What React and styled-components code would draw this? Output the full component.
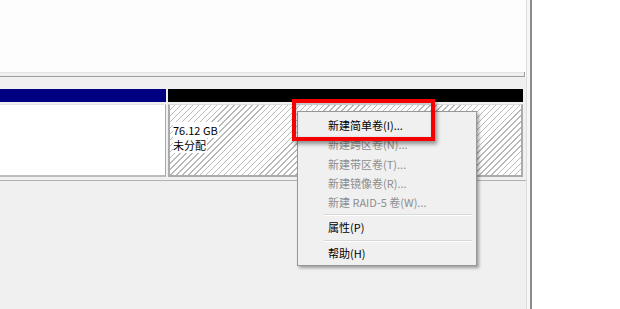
import styled, { createGlobalStyle } from "styled-components";

const GlobalStyle = createGlobalStyle`
  html, body {
    margin: 0;
    padding: 0;
    background: #fff;
  }
  body {
    font-family: "Noto Sans CJK SC", "Microsoft YaHei", sans-serif;
    font-size: 11px;
    color: #000;
  }
`;

const Screen = styled.div`
  position: relative;
  width: 620px;
  height: 309px;
  overflow: hidden;
  display: flex;
  background: #fff;
`;

const MainColumn = styled.div`
  width: 526px;
  display: flex;
  flex-direction: column;
`;

const ListPane = styled.div`
  height: 72px;
  background: #fdfdfd;
`;

const PaneEdge = styled.div`
  position: relative;
  height: 3px;
  margin-right: 1px;
  background: #f0f0f0;
  border-top: 1px solid #e4e4e4;
  border-bottom: 1px solid #9d9d9d;

  &::after {
    content: "";
    position: absolute;
    right: 0;
    bottom: 0;
    width: 1px;
    height: 4px;
    background: #9d9d9d;
  }
`;

const GraphPane = styled.div`
  flex: 1;
  background: #f0f0f0;
  padding-top: 12px;
  display: flex;
  flex-direction: column;
`;

const DiskRow = styled.div`
  display: flex;
  gap: 2px;
`;

const Partition = styled.div`
  width: ${({ width }) => width}px;
  display: flex;
  flex-direction: column;
  gap: 2px;
`;

const HeaderBar = styled.div`
  height: 13px;
  background: ${({ color }) => color};
`;

const VolumeBox = styled.div`
  height: 73px;
  box-sizing: border-box;
  background: #fff;
  border-right: 1px solid #a9a9a9;
  border-bottom: 2px solid #bcbcbc;
  border-top: 1px solid #e6e6e6;
`;

const FreeBox = styled.div`
  height: 73px;
  box-sizing: border-box;
  border: 2px solid #ababab;
  border-top: 1px solid #dedede;
  padding: 18px 0 0 3px;
  background-color: #fff;
  background-image: repeating-linear-gradient(
    135deg,
    #fff 0px,
    #fff 3.2px,
    #b9b9b9 3.2px,
    #b9b9b9 4.2px
  );
`;

const FreeLabel = styled.div`
  line-height: 15px;
  height: 15px;

  span {
    background: #fff;
    padding-right: 1px;
  }
`;

const RowRule = styled.div`
  height: 1px;
  margin-top: 3px;
  background: #b2b2b2;
`;

const Splitter = styled.div`
  width: 6px;
  box-sizing: border-box;
  background: #f7f7f7;
  border-left: 1px solid #dcdcdc;
  border-right: 2px solid #8c8c8c;
`;

const SidePane = styled.div`
  flex: 1;
  background: #fff;
`;

const Menu = styled.div`
  position: absolute;
  left: 297px;
  top: 111px;
  width: 180px;
  box-sizing: border-box;
  padding: 4px 2px 2px 2px;
  background: #f0f0f0;
  border: 1px solid #979797;
  box-shadow: 2px 2px 3px rgba(0, 0, 0, 0.35);
`;

const MenuItem = styled.div`
  height: 19.25px;
  line-height: 19.25px;
  padding-left: 28px;
  white-space: nowrap;
  color: ${({ disabled }) => (disabled ? "#8d8d8d" : "#000")};
`;

const MenuSeparator = styled.div`
  height: 1px;
  margin: 2px 2px 2px 24px;
  background: #d7d7d7;
  border-bottom: 1px solid #fff;
`;

const Highlight = styled.div`
  position: absolute;
  left: 292px;
  top: 99px;
  width: 143px;
  height: 42px;
  box-sizing: border-box;
  border: 4px solid #f40000;
  box-shadow: 2px 3px 4px rgba(0, 0, 0, 0.4),
    inset 1px 1px 3px rgba(0, 0, 0, 0.25);
`;

const menuItems = [
  { label: "新建简单卷(I)..." },
  { label: "新建跨区卷(N)...", disabled: true },
  { label: "新建带区卷(T)...", disabled: true },
  { label: "新建镜像卷(R)...", disabled: true },
  { label: "新建 RAID-5 卷(W)...", disabled: true },
  { separator: true },
  { label: "属性(P)" },
  { separator: true },
  { label: "帮助(H)" },
];

function App() {
  return (
    <>
      <GlobalStyle />
      <Screen>
        <MainColumn>
          <ListPane />
          <PaneEdge />
          <GraphPane>
            <DiskRow>
              <Partition width={166}>
                <HeaderBar color="#000080" />
                <VolumeBox />
              </Partition>
              <Partition width={355}>
                <HeaderBar color="#000" />
                <FreeBox>
                  <FreeLabel>
                    <span>76.12 GB</span>
                  </FreeLabel>
                  <FreeLabel>
                    <span>未分配</span>
                  </FreeLabel>
                </FreeBox>
              </Partition>
            </DiskRow>
            <RowRule />
          </GraphPane>
        </MainColumn>
        <Splitter />
        <SidePane />

        <Menu>
          {menuItems.map((item, index) =>
            item.separator ? (
              <MenuSeparator key={index} />
            ) : (
              <MenuItem key={index} disabled={item.disabled}>
                {item.label}
              </MenuItem>
            )
          )}
        </Menu>
        <Highlight />
      </Screen>
    </>
  );
}

export default App;
